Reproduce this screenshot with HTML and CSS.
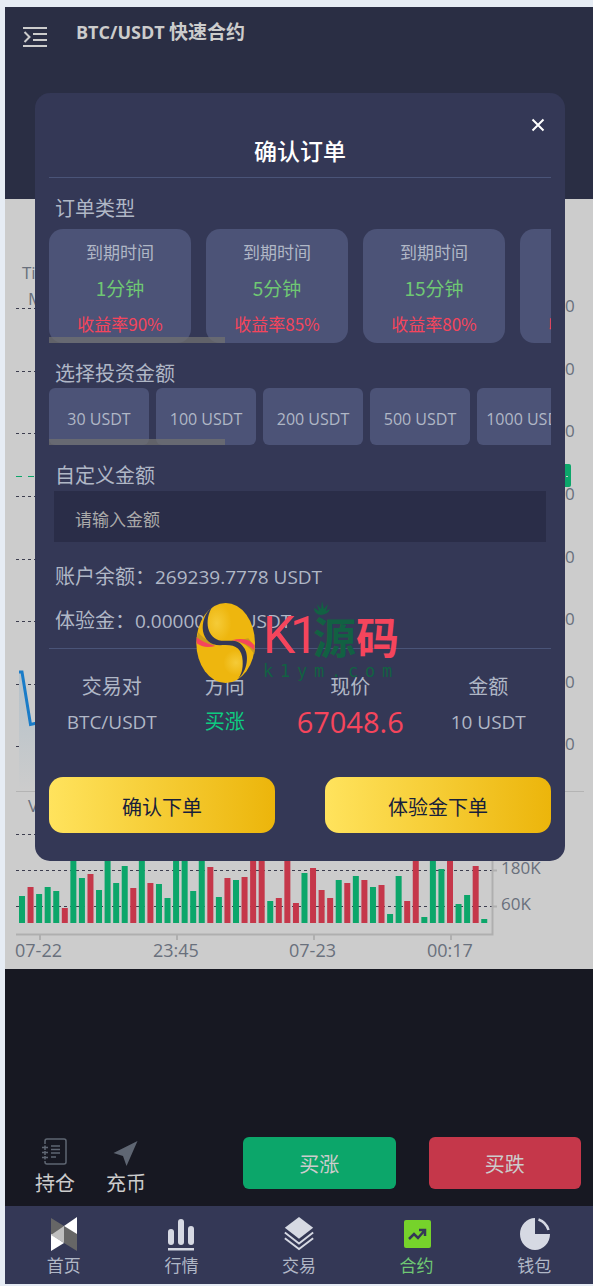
FILE: index.html
```html
<!DOCTYPE html>
<html lang="zh-CN">
<head>
<meta charset="utf-8">
<meta name="viewport" content="width=device-width, initial-scale=1">
<title>BTC/USDT 快速合约</title>
<link rel="stylesheet" href="styles.css">
</head>
<body>
<div class="app">
  <header class="topbar">
    <button class="icon-button" type="button" aria-label="菜单">
      <svg width="24" height="22" viewBox="0 0 24 22" fill="none" stroke="#cccccc" stroke-width="2"><path d="M0 2H24M10 8H24M10 14H24M0 20H24"/><path d="M1.500 6L6.500 11L1.500 16"/></svg>
    </button>
    <h1 class="topbar-title"><span class="title-pair">BTC/USDT</span> 快速合约</h1>
  </header>

  <main>
    <svg class="chart" viewBox="0 0 588 770" role="img" aria-label="行情图">
      <defs>
        <linearGradient id="area" x1="0" y1="0" x2="0" y2="1"><stop offset="0" stop-color="#b4c1ca"/><stop offset="1" stop-color="#cccccc"/></linearGradient>
      </defs>
      <path class="grid" d="M11 109.500H487M11 172.500H487M11 234.500H487M11 297.500H487M11 360.500H487M11 422.500H487M11 485.500H487M11 547.500H487M11 635.500H487M11 671.500H487M11 707.500H487"/>
      <path class="mark" d="M11 277.500H560"/>
      <rect x="500" y="265" width="66" height="23" rx="2" fill="#0ca66a"/>
      <path d="M561 277.500H563" stroke="#cccccc"/>
      <path d="M14 473H17L25 526L32 524V591H14Z" fill="url(#area)"/>
      <path d="M14 473H17L25.500 525.500L32 524" fill="none" stroke="#1a7cc8" stroke-width="3"/>
      <g class="axis-label">
        <text x="17" y="80">Ti</text><text x="23" y="106">M</text><text x="23" y="613">V</text>
        <text x="560" y="113">0</text><text x="560" y="176">0</text><text x="560" y="238">0</text><text x="560" y="301">0</text>
        <text x="560" y="364">0</text><text x="560" y="426">0</text><text x="560" y="489">0</text><text x="560" y="551">0</text>
        <text x="496" y="675">180K</text><text x="496" y="711">60K</text>
        <text class="time" x="10" y="758">07-22</text><text class="time" x="148" y="758">23:45</text><text class="time" x="284" y="758">07-23</text><text class="time" x="422" y="758">00:17</text>
      </g>
      <path d="M11 592.500H579" stroke="#b4b4b4"/>
      <path d="M11 735.500H487.500V640M35 736V741M172 736V741M309 736V741M446 736V741M488 671.500H492M488 707.500H492" fill="none" stroke="#afafaf" stroke-width="2"/>
      <g id="volume"></g>
    </svg>
  </main>

  <section class="actions">
    <a class="shortcut" href="#positions">
      <svg width="26" height="30" viewBox="0 0 26 30" fill="none" stroke="#5f6673" stroke-width="1.500"><path d="M3 7V4Q3 2 5 2H22Q24 2 24 4V25Q24 27 22 27H5Q3 27 3 25V24"/><path d="M0 10.500H6M3 8.500V13M0 15.500H6M3 14V18M0 20.500H6M3 19V22.500"/><path d="M9 9H18M9 12.500H18M9 16H18M9 20H14"/></svg>
      <span>持仓</span>
    </a>
    <a class="shortcut" href="#deposit">
      <svg width="26" height="30" viewBox="0 0 26 30"><path d="M24.500 4L0.500 16L10 19L13.500 29Z" fill="#5f6673"/></svg>
      <span>充币</span>
    </a>
    <button class="trade up" type="button">买涨</button>
    <button class="trade down" type="button">买跌</button>
  </section>

  <nav class="tabs">
    <a href="#home">
      <svg width="32" height="34" viewBox="0 0 32 34"><path d="M3 1L16 9V17L3 20Z" fill="#666"/><path d="M16 9L29 16V34L16 26Z" fill="#666"/><path d="M29 0V17L16 9Z" fill="#fff"/><path d="M3 17L16 26L3 34Z" fill="#fff"/><path d="M3 18L16 9V26Z" fill="#bfbfbf"/></svg>
      <span>首页</span>
    </a>
    <a href="#market">
      <svg width="32" height="34" viewBox="0 0 32 34" fill="#d6d9e3"><rect x="3" y="12" width="6" height="16" rx="3"/><rect x="13" y="2" width="6" height="26" rx="3"/><rect x="23" y="9" width="6" height="19" rx="3"/><rect x="3" y="31" width="26" height="2.500"/></svg>
      <span>行情</span>
    </a>
    <a href="#trade">
      <svg width="32" height="36" viewBox="0 0 32 36"><path d="M16 0L31 11.500L16 23L1 11.500Z" fill="#d6d9e3"/><path d="M1 16.500L16 28L31 16.500M1 22.500L16 34L31 22.500" fill="none" stroke="#d6d9e3" stroke-width="2"/></svg>
      <span>交易</span>
    </a>
    <a class="active" href="#contract">
      <svg width="32" height="34" viewBox="0 0 32 34"><rect x="3" y="3" width="27" height="28" rx="2" fill="#76d32b"/><path d="M8 22L13 17L17 21L24 13M18 13H24V19" fill="none" stroke="#343856" stroke-width="2.500"/></svg>
      <span>合约</span>
    </a>
    <a href="#wallet">
      <svg width="32" height="34" viewBox="0 0 32 34"><path d="M17 1A15 16 0 1 0 32 17H17Z" fill="#d6d9e3"/><path d="M20.500 2.500Q28 5 30.500 13" fill="none" stroke="#d6d9e3" stroke-width="2.500"/></svg>
      <span>钱包</span>
    </a>
  </nav>

  <div class="modal" role="dialog" aria-labelledby="dialog-title">
    <button class="close" type="button" aria-label="关闭"><svg width="14" height="14" viewBox="0 0 14 14"><path d="M1.500 1.500L12.500 12.500M12.500 1.500L1.500 12.500" stroke="#fff" stroke-width="2"/></svg></button>
    <h2 class="modal-title" id="dialog-title">确认订单</h2>

    <h3 class="label">订单类型</h3>
    <div class="scroller types">
      <div class="strip">
        <button class="type" type="button"><span>到期时间</span><span class="minutes">1分钟</span><span class="rate">收益率90%</span></button>
        <button class="type" type="button"><span>到期时间</span><span class="minutes">5分钟</span><span class="rate">收益率85%</span></button>
        <button class="type" type="button"><span>到期时间</span><span class="minutes">15分钟</span><span class="rate">收益率80%</span></button>
        <button class="type" type="button"><span>到期时间</span><span class="minutes">30分钟</span><span class="rate">收益率75%</span></button>
      </div>
    </div>

    <h3 class="label">选择投资金额</h3>
    <div class="scroller">
      <div class="strip amounts">
        <button class="amount" type="button">30 USDT</button>
        <button class="amount" type="button">100 USDT</button>
        <button class="amount" type="button">200 USDT</button>
        <button class="amount" type="button">500 USDT</button>
        <button class="amount" type="button">1000 USDT</button>
      </div>
    </div>

    <label class="label" for="custom">自定义金额</label>
    <input class="custom" id="custom" type="text" placeholder="请输入金额">

    <p class="balance">账户余额：<span class="value">269239.7778 USDT</span></p>
    <p class="balance bonus">体验金：<span class="value">0.00000000 USDT</span></p>

    <table class="summary">
      <thead><tr><th class="c-pair">交易对</th><th class="c-side">方向</th><th class="c-price">现价</th><th class="c-amount">金额</th></tr></thead>
      <tbody><tr><td>BTC/USDT</td><td class="side">买涨</td><td class="price">67048.6</td><td>10 USDT</td></tr></tbody>
    </table>

    <div class="confirm">
      <button type="button">确认下单</button>
      <button type="button">体验金下单</button>
    </div>

    <svg class="watermark" width="208" height="86" viewBox="0 0 208 86">
      <defs>
        <radialGradient id="gold1" cx="0.35" cy="0.25" r="0.25"><stop offset="0" stop-color="#f5cb38"/><stop offset="1" stop-color="#eeb60e"/></radialGradient>
        <radialGradient id="gold2"><stop offset="0" stop-color="#f5cb38"/><stop offset="1" stop-color="#eeb60e"/></radialGradient>
      </defs>
      <g transform="translate(-15 -10) scale(0.3333)">
        <ellipse cx="137" cy="159" rx="88" ry="120" fill="url(#gold1)"/>
        <circle cx="168" cy="218" r="38" fill="url(#gold2)"/>
        <path d="M55 127Q70 148 92 152L104 167Q70 166 50 143Z" fill="#c79a1e"/>
        <path d="M165 153Q200 158 223 192L225 170L205 145Z" fill="#c79a1e"/>
        <path d="M50 142Q72 160 106 168Q72 177 50 160Z" fill="#f5455c"/>
        <path d="M155 151Q202 138 223 166V181Q198 157 155 151Z" fill="#f5455c"/>
        <path d="M98 48C50 92 62 166 120 166C162 161 186 172 188 212C189 240 184 252 174 267C205 240 207 193 192 173C172 143 150 155 124 152C82 147 70 92 98 48Z" fill="#343856"/>
      </g>
      <text class="wm-k" x="68" y="53">K</text>
      <text class="wm-k" x="95" y="53">1</text>
      <text class="wm-cjk wm-green" x="118" y="54">源</text>
      <text class="wm-cjk" x="161" y="54">码</text>
      <path d="M126 15Q119 14 119 8L124 11L122 4L126 9L127 1L129 9L133 4L131 11L135 9Q134 14 126 15Z" fill="#126143"/>
      <text class="wm-url" x="68 85 102 119 136 153 170 187" y="77">k1ym.com</text>
    </svg>
  </div>
</div>
<script src="chart.js"></script>
</body>
</html>
```

FILE: styles.css
```css
* { box-sizing: border-box; }

body {
  margin: 0;
  padding: 7px 0 2px 5px;
  background: #e6ecf4;
  color: #b0b7c6;
  font: 20px/30px "Noto Sans CJK SC", sans-serif;
}

button, input { font: inherit; color: inherit; border: 0; padding: 0; }
button { background: none; cursor: pointer; }
a { color: inherit; text-decoration: none; }
h1, h2, h3, p { margin: 0; font-weight: 400; }
svg { display: block; }

.app { position: relative; background: #171822; }

.topbar {
  display: flex;
  align-items: flex-start;
  gap: 29px;
  height: 192px;
  padding: 10px 18px;
  background: #2a2e44;
}
.icon-button { padding-top: 9px; }
.topbar-title { color: #ccc; font-size: 19px; font-weight: 700; line-height: 28px; }
.title-pair { font-family: "Open Sans", sans-serif; font-size: 18px; line-height: 20px; }

.chart { width: 100%; height: auto; background: #ccc; }
.grid { fill: none; stroke: #3c3d4e; stroke-dasharray: 3 3; }
.mark { fill: none; stroke: #0ca66a; stroke-dasharray: 6 6; }
.axis-label { font: 17px "Open Sans", sans-serif; fill: #69707c; }
.time { font-size: 18px; }
.bar-up { fill: #0ca66a; }
.bar-down { fill: #c5374a; }

.actions {
  display: flex;
  align-items: flex-start;
  padding: 168px 12px 8px 30px;
  color: #ccc;
}
.shortcut {
  display: flex;
  flex-direction: column;
  align-items: center;
  width: 40px;
  margin-right: 31px;
}
.shortcut svg { margin-bottom: 1px; }
.trade { flex: 1; height: 52px; padding-top: 2px; border-radius: 6px; }
.up { background: #0ca66a; margin: 0 33px 0 66px; }
.down { background: #c5374a; }

.tabs {
  display: grid;
  grid-template-columns: repeat(5, 1fr);
  height: 78px;
  padding-top: 11px;
  background: #343856;
  font-size: 17px;
}
.tabs a { display: flex; flex-direction: column; align-items: center; line-height: 28px; }
.tabs svg { height: 34px; }
.tabs .active { color: #6fc873; }

.modal {
  position: absolute;
  top: 86px;
  left: 30px;
  right: 28px;
  padding: 43px 14px 28px;
  border-radius: 15px;
  background: #343856;
}
.close { position: absolute; top: 25px; right: 20px; }
.modal-title {
  padding-bottom: 13px;
  border-bottom: 1px solid #4a5478;
  color: #fff;
  font-size: 23px;
  font-weight: 500;
  line-height: 28px;
  text-align: center;
}
.label { display: block; margin-top: 15px; padding-left: 6px; font-size: 20px; }

.scroller { position: relative; overflow: hidden; }
.scroller::after {
  content: "";
  position: absolute;
  left: 0;
  bottom: 0;
  width: 35%;
  height: 6px;
  background: rgba(112, 112, 112, .75);
}
.types { margin-top: 6px; }
.strip { display: flex; gap: 15px; }
.type {
  display: flex;
  flex: 0 0 142px;
  flex-direction: column;
  align-items: center;
  height: 114px;
  padding-top: 8px;
  border-radius: 14px;
  background: #4c5377;
  font-size: 17px;
}
.type .minutes { margin: 6px 0; color: #6fc873; font-size: 19px; }
.type .rate { color: #f5455c; white-space: nowrap; }
.amounts { gap: 7px; }
.amount {
  flex: 0 0 100px;
  height: 57px;
  padding-top: 4px;
  border-radius: 6px;
  background: #4c5377;
  font: 16px "Open Sans", sans-serif;
  white-space: nowrap;
}

.custom {
  display: block;
  width: calc(100% - 10px);
  height: 51px;
  margin: 1px 5px 0;
  padding: 3px 21px 0;
  background: #2a2d48;
  font-size: 17px;
}
.custom::placeholder { color: #aaa; opacity: 1; }

.balance { margin-top: 19px; padding-left: 6px; }
.bonus { margin-top: 14px; }
.value { font-family: "Open Sans", sans-serif; font-size: 19px; line-height: 20px; }

.summary {
  width: 100%;
  margin-top: 13px;
  padding-top: 19px;
  border-top: 1px solid #4a5478;
  border-spacing: 0;
  table-layout: fixed;
}
.summary th, .summary td { height: 36px; padding: 0; font-weight: 400; text-align: center; line-height: 36px; }
.summary td { font-family: "Open Sans", "Noto Sans CJK SC", sans-serif; font-size: 19px; }
.summary .side { color: #0ecb81; font-size: 20px; }
.summary .price { color: #f5455c; font-size: 29px; }
.c-pair { width: 25%; }
.c-side { width: 20%; }
.c-price { width: 30%; }
.c-amount { width: 25%; }

.confirm { display: flex; justify-content: space-between; margin-top: 37px; }
.confirm button {
  width: 45%;
  height: 56px;
  padding-top: 3px;
  border-radius: 14px;
  background: linear-gradient(90deg, #ffe35d, #ecb50b);
  color: #17203b;
}

.watermark { position: absolute; top: 507px; left: 160px; pointer-events: none; }
.wm-k { font: 52px "Roboto", sans-serif; fill: #f5455c; }
.wm-cjk { font: 700 43px "Noto Sans CJK SC", sans-serif; fill: #f5455c; }
.wm-green { fill: #126143; }
.wm-url { font: 17px "DejaVu Sans Mono", monospace; fill: #126143; }
```

FILE: chart.js
```js
// Volume bars: top edge in chart units, with the direction of each candle.
const bars = "697g 688r 695g 688g 692g 709r 650g 679g 675r 691g 650g 684g 667g 689r 650g 684r 685g 699g 650g 650g 692g 650g 668r 698g 679r 681g 678r 650r 650r 702g 699r 650r 704r 674g 669r 691r 699r 681g 684r 677g 681r 688g 686r 715g 677g 702r 650r 718g 650g 670g 650r 705g 696g 667r 720g".split(" ");
const base = 724;
const group = document.getElementById("volume");

bars.forEach((item, i) => {
  const top = parseInt(item, 10);
  const rect = document.createElementNS("http://www.w3.org/2000/svg", "rect");
  rect.setAttribute("x", 14 + i * 8.56);
  rect.setAttribute("y", top);
  rect.setAttribute("width", 6);
  rect.setAttribute("height", base - top);
  rect.setAttribute("class", item.endsWith("g") ? "bar-up" : "bar-down");
  group.appendChild(rect);
});
```
